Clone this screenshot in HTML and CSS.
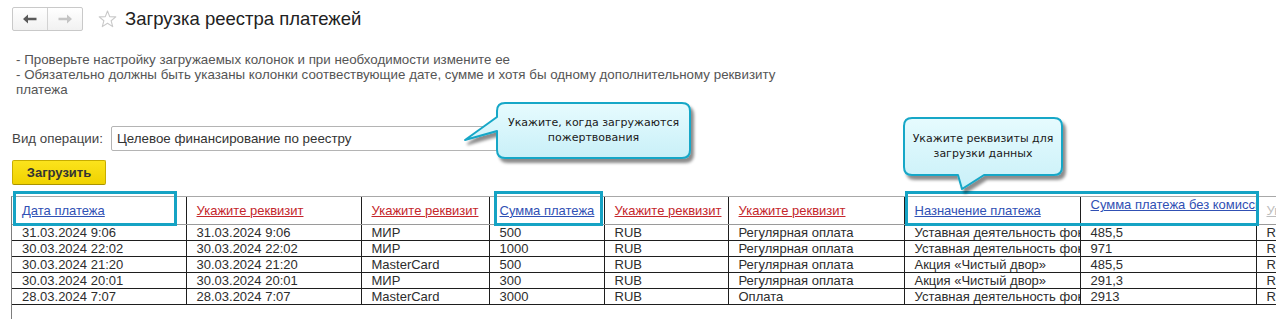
FILE: index.html
```html
<!DOCTYPE html>
<html lang="ru">
<head>
    <meta charset="UTF-8">
    <title>Загрузка реестра платежей</title>
    <link rel="stylesheet" href="styles.css">
</head>
<body>
    <div class="page">
        <div class="header">
            <div class="nav">
                <span class="nav-btn">
                    <svg width="14" height="10" viewBox="0 0 14 10"><path d="M0 5 L5 0.5 V3.8 H13.5 V6.2 H5 V9.5 Z" fill="#5a5a5a"/></svg>
                </span>
                <span class="nav-btn">
                    <svg width="14" height="10" viewBox="0 0 14 10"><path d="M14 5 L9 0.5 V3.8 H0.5 V6.2 H9 V9.5 Z" fill="#c4c4c4"/></svg>
                </span>
            </div>
            <svg class="star" width="19" height="18" viewBox="0 0 19 18">
                <path d="M9.5 1 L11.7 6.6 L17.8 6.9 L13.1 10.7 L14.7 16.6 L9.5 13.3 L4.3 16.6 L5.9 10.7 L1.2 6.9 L7.3 6.6 Z" fill="none" stroke="#c9c9c9" stroke-width="1.1" stroke-linejoin="round"/>
            </svg>
            <h1 class="title">Загрузка реестра платежей</h1>
        </div>

        <p class="hint">
            - Проверьте настройку загружаемых колонок и при необходимости измените ее<br>
            - Обязательно должны быть указаны колонки соотвествующие дате, сумме и хотя бы одному дополнительному реквизиту платежа
        </p>

        <div class="op-row">
            <label class="op-label">Вид операции:</label>
            <div class="op-input">Целевое финансирование по реестру</div>
        </div>

        <button class="btn-load">Загрузить</button>

        <div class="grid-area">
            <div class="grid">
                <table class="grid-table">
                    <colgroup>
                        <col style="width:174px">
                        <col style="width:175px">
                        <col style="width:128px">
                        <col style="width:115px">
                        <col style="width:124px">
                        <col style="width:176px">
                        <col style="width:176px">
                        <col style="width:176px">
                        <col style="width:120px">
                    </colgroup>
                    <thead>
                        <tr>
                            <th><a class="link-set">Дата платежа</a></th>
                            <th><a class="link-empty">Укажите реквизит</a></th>
                            <th><a class="link-empty">Укажите реквизит</a></th>
                            <th><a class="link-set">Сумма платежа</a></th>
                            <th><a class="link-empty">Укажите реквизит</a></th>
                            <th><a class="link-empty">Укажите реквизит</a></th>
                            <th><a class="link-set">Назначение платежа</a></th>
                            <th class="th-top"><a class="link-set">Сумма платежа без комиссии</a></th>
                            <th><a class="link-off">Укажите реквизит</a></th>
                        </tr>
                    </thead>
                    <tbody>
                        <tr>
                            <td>31.03.2024 9:06</td><td>31.03.2024 9:06</td><td>МИР</td><td>500</td><td>RUB</td>
                            <td>Регулярная оплата</td><td>Уставная деятельность фонда</td><td>485,5</td><td>RUB</td>
                        </tr>
                        <tr>
                            <td>30.03.2024 22:02</td><td>30.03.2024 22:02</td><td>МИР</td><td>1000</td><td>RUB</td>
                            <td>Регулярная оплата</td><td>Уставная деятельность фонда</td><td>971</td><td>RUB</td>
                        </tr>
                        <tr>
                            <td>30.03.2024 21:20</td><td>30.03.2024 21:20</td><td>MasterCard</td><td>500</td><td>RUB</td>
                            <td>Регулярная оплата</td><td>Акция «Чистый двор»</td><td>485,5</td><td>RUB</td>
                        </tr>
                        <tr>
                            <td>30.03.2024 20:01</td><td>30.03.2024 20:01</td><td>МИР</td><td>300</td><td>RUB</td>
                            <td>Регулярная оплата</td><td>Акция «Чистый двор»</td><td>291,3</td><td>RUB</td>
                        </tr>
                        <tr>
                            <td>28.03.2024 7:07</td><td>28.03.2024 7:07</td><td>MasterCard</td><td>3000</td><td>RUB</td>
                            <td>Оплата</td><td>Уставная деятельность фонда</td><td>2913</td><td>RUB</td>
                        </tr>
                    </tbody>
                </table>
            </div>

            <!-- highlighted columns -->
            <div class="mark mark-date"></div>
            <div class="mark mark-sum"></div>
            <div class="mark mark-purpose"></div>
        </div>

        <!-- callouts -->
        <div class="callout callout-op">
            <svg class="callout-shape" width="240" height="70" viewBox="0 0 240 70">
                <defs>
                    <linearGradient id="fill1" x1="0" y1="0" x2="0" y2="1">
                        <stop offset="0" stop-color="#e6fbfe"/>
                        <stop offset="1" stop-color="#c9f0f8"/>
                    </linearGradient>
                    <filter id="shadow1" x="-10%" y="-10%" width="130%" height="140%">
                        <feDropShadow dx="3" dy="4" stdDeviation="1.8" flood-color="#000" flood-opacity="0.45"/>
                    </filter>
                </defs>
                <path d="M43 3 H220 Q228 3 228 11 V50 Q228 58 220 58 H43 Q35 58 35 50 V31 L3 40 L35 17 V11 Q35 3 43 3 Z"
                      fill="url(#fill1)" stroke="#17a7c7" stroke-width="2" stroke-linejoin="round" filter="url(#shadow1)"/>
            </svg>
            <div class="callout-text">Укажите, когда загружаются<br>пожертвования</div>
        </div>

        <div class="callout callout-req">
            <svg class="callout-shape" width="175" height="82" viewBox="0 0 175 82">
                <defs>
                    <linearGradient id="fill2" x1="0" y1="0" x2="0" y2="1">
                        <stop offset="0" stop-color="#e6fbfe"/>
                        <stop offset="1" stop-color="#c9f0f8"/>
                    </linearGradient>
                    <filter id="shadow2" x="-10%" y="-10%" width="130%" height="140%">
                        <feDropShadow dx="3" dy="4" stdDeviation="1.8" flood-color="#000" flood-opacity="0.45"/>
                    </filter>
                </defs>
                <path d="M14 4 H156 Q164 4 164 12 V53 Q164 61 156 61 H86 L64 75 L60 61 H14 Q6 61 6 53 V12 Q6 4 14 4 Z"
                      fill="url(#fill2)" stroke="#17a7c7" stroke-width="2" stroke-linejoin="round" filter="url(#shadow2)"/>
            </svg>
            <div class="callout-text">Укажите реквизиты для<br>загрузки данных</div>
        </div>
    </div>
</body>
</html>
```

FILE: styles.css
```css
* {
    margin: 0;
    padding: 0;
    box-sizing: border-box;
}

body {
    font-family: "Liberation Sans", Arial, sans-serif;
    font-size: 13px;
    color: #333;
    background: #fff;
    width: 1276px;
    height: 319px;
    overflow: hidden;
}

.page {
    position: relative;
    display: flex;
    flex-direction: column;
    height: 319px;
    overflow: hidden;
}

/* Header */
.header {
    display: flex;
    align-items: center;
    padding: 7px 0 0 12px;
    height: 31px;
    flex-shrink: 0;
}

.nav {
    display: flex;
    width: 71px;
    height: 24px;
    border: 1px solid #c9c9c9;
    border-radius: 2px;
    background: linear-gradient(#ffffff, #f1f1f1);
}

.nav-btn {
    flex: 1;
    display: flex;
    align-items: center;
    justify-content: center;
}

.nav-btn + .nav-btn {
    border-left: 1px solid #d2d2d2;
}

.star {
    margin-left: 15px;
    margin-top: -1px;
}

.title {
    font-size: 18.5px;
    font-weight: normal;
    color: #222;
    margin-left: 8px;
    margin-top: -1px;
}

/* Hint */
.hint {
    margin-top: 21px;
    padding-left: 16px;
    width: 800px;
    font-size: 13.33px;
    line-height: 15px;
    color: #555;
}

/* Operation */
.op-row {
    display: flex;
    align-items: center;
    margin-top: 29px;
    padding-left: 12px;
    font-size: 13.33px;
}

.op-label {
    width: 99px;
    color: #444;
}

.op-input {
    width: 400px;
    height: 25px;
    line-height: 23px;
    padding-left: 5px;
    border: 1px solid #b4b4b4;
    border-radius: 2px;
    color: #333;
}

.btn-load {
    display: block;
    flex-shrink: 0;
    margin: 9px 0 0 12px;
    width: 94px;
    height: 25px;
    font-family: inherit;
    font-size: 13px;
    font-weight: bold;
    color: #333;
    background: linear-gradient(#fbe31c, #f0d200);
    border: 1px solid #c7ad00;
    border-bottom-color: #a99300;
    border-radius: 2px;
}

/* Grid */
.grid-area {
    position: relative;
    flex: 1;
    min-height: 0;
    margin: 11px 0 0 11px;
}

.grid {
    height: 100%;
    border-left: 1px solid #7d7d7d;
    border-top: 1px solid #a8a8a8;
    overflow: hidden;
}

.grid-table {
    border-collapse: collapse;
    table-layout: fixed;
    width: 1364px;
}

.grid-table th,
.grid-table td {
    padding: 0 0 0 10px;
    text-align: left;
    white-space: nowrap;
    overflow: hidden;
    text-overflow: clip;
    border-right: 1px solid #1e1e1e;
    line-height: 15px;
}

.grid-table th {
    height: 27px;
    font-weight: normal;
    border-bottom: 1px solid #9a9a9a;
    vertical-align: middle;
}

.grid-table th.th-top {
    vertical-align: top;
    padding-top: 0;
}

.grid-table td {
    height: 16px;
    border-bottom: 1px solid #1e1e1e;
    color: #2d2d2d;
}

.link-set,
.link-empty,
.link-off {
    text-decoration: underline;
}

.link-set {
    color: #3050b4;
}

.link-empty {
    color: #c4262b;
}

.link-off {
    color: #bdbdbd;
}

/* Highlighted column markers */
.mark {
    position: absolute;
    top: -5px;
    height: 35px;
    border: 3px solid #15a3c4;
    pointer-events: none;
}

.mark-date {
    left: 2px;
    width: 164px;
}

.mark-sum {
    left: 483px;
    width: 109px;
}

.mark-purpose {
    left: 894px;
    width: 354px;
}

/* Callouts */
.callout {
    position: absolute;
    pointer-events: none;
}

.callout-shape {
    position: absolute;
    top: 0;
    left: 0;
}

.callout-text {
    position: absolute;
    font-family: "DejaVu Sans", Verdana, sans-serif;
    font-size: 11px;
    line-height: 15px;
    color: #1a1a1a;
    text-align: center;
}

.callout-op {
    left: 462px;
    top: 100px;
    width: 240px;
    height: 70px;
}

.callout-op .callout-text {
    left: 35px;
    top: 15px;
    width: 193px;
}

.callout-req {
    left: 898px;
    top: 114px;
    width: 175px;
    height: 82px;
}

.callout-req .callout-text {
    left: 6px;
    top: 17px;
    width: 158px;
}
```
